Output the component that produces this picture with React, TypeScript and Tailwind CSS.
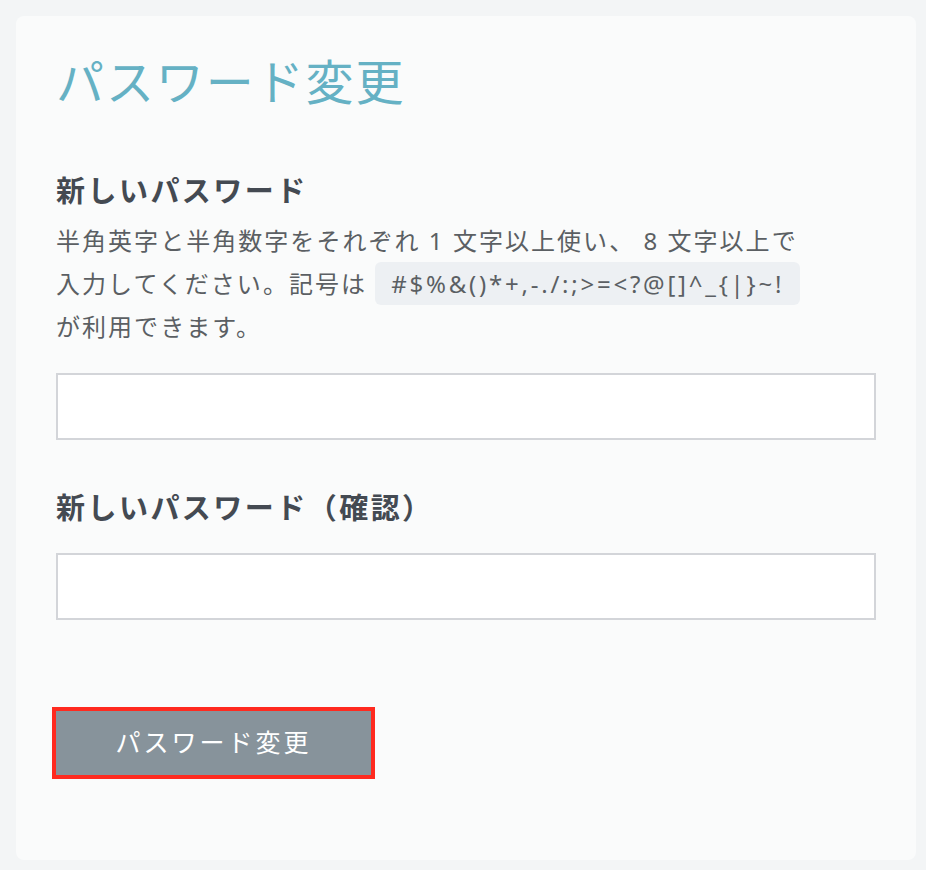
import React from "react";

const font = { fontFamily: '"Noto Sans", "Noto Sans CJK JP", sans-serif' };

function Field({ label }: { label: string }) {
  return (
    <input
      type="password"
      aria-label={label}
      className="block h-[67px] w-full border-2 border-[#d3d5d9] bg-white px-4 text-[22px] outline-none"
    />
  );
}

export default function App() {
  return (
    <div className="min-h-[870px] bg-[#f3f5f6] pt-4 pl-4 pr-[10px]" style={font}>
      <div className="h-[844px] rounded-lg bg-[#fafbfb] px-10 pt-[32px]">
        <h1 className="text-[48px] leading-[68px] tracking-[0.04em] text-[#65b1c4]">
          パスワード変更
        </h1>

        <h2 className="mt-[55px] text-[29px] font-bold leading-[40px] tracking-[0.085em] text-[#444a52]">
          新しいパスワード
        </h2>
        <div className="mt-[8px] text-[24px] leading-[43px] tracking-[0.085em] text-[#5b5f63]">
          <div className="whitespace-nowrap">
            半角英字と半角数字をそれぞれ 1 文字以上使い、 8 文字以上で
          </div>
          <div className="whitespace-nowrap">
            入力してください。記号は{" "}
            <span className="inline-block rounded-md bg-[#edf0f3] px-4 leading-[43px] tracking-[0.115em]">
              #$%&amp;()*+,-./:;&gt;=&lt;?@[]^_{"{"}|{"}"}~!
            </span>
          </div>
          <div className="whitespace-nowrap">が利用できます。</div>
        </div>

        <div className="mt-[25px]">
          <Field label="新しいパスワード" />
        </div>

        <h2 className="mt-[48px] text-[29px] font-bold leading-[40px] tracking-[0.085em] text-[#444a52]">
          新しいパスワード（確認）
        </h2>
        <div className="mt-[25px]">
          <Field label="新しいパスワード（確認）" />
        </div>

        <button
          type="button"
          className="mt-[91px] h-[64px] w-[315px] bg-[#87939b] text-[25px] tracking-[0.12em] text-white outline-4 outline-[#ff2a1f]"
        >
          パスワード変更
        </button>
      </div>
    </div>
  );
}
